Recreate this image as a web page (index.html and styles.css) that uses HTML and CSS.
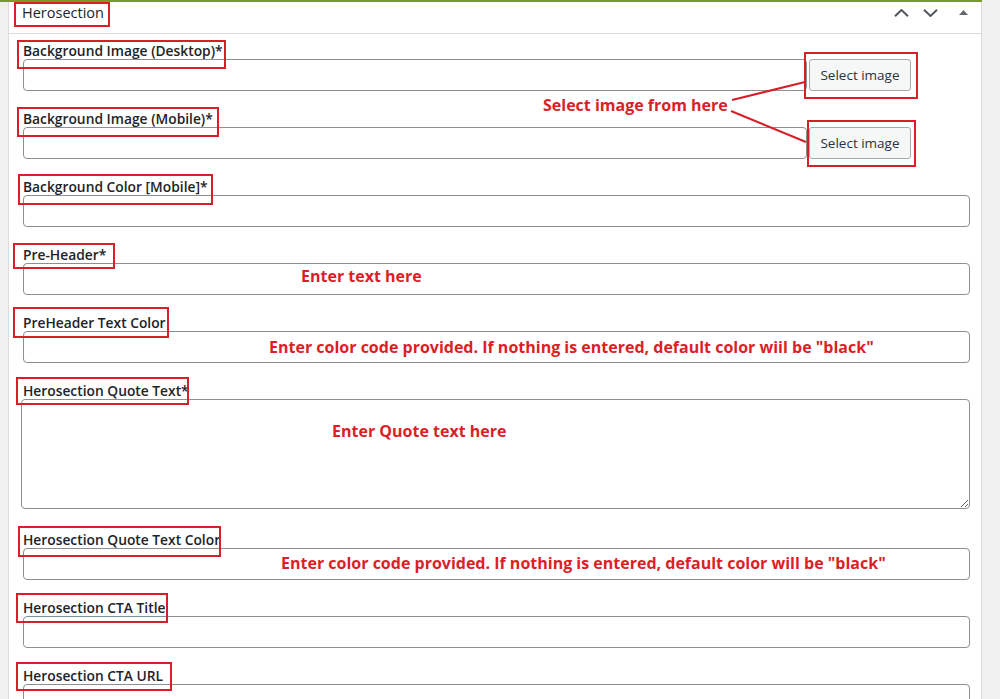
FILE: index.html
```html
<!DOCTYPE html>
<html lang="en">
<head>
<meta charset="utf-8">
<title>Herosection</title>
<link rel="stylesheet" href="styles.css">
</head>
<body>
<div class="page">
  <div class="frame">
    <div class="panel">
      <div class="panel-head">
        <h2 class="panel-title">Herosection</h2>
        <div class="panel-actions">
          <button class="icon-btn up" type="button" aria-label="Move up">
            <svg width="15" height="8" viewBox="0 0 15 8"><polyline points="1,7.2 7.5,1 14,7.2" fill="none" stroke="currentColor" stroke-width="2"/></svg>
          </button>
          <button class="icon-btn down" type="button" aria-label="Move down">
            <svg width="15" height="8" viewBox="0 0 15 8"><polyline points="1,0.8 7.5,7 14,0.8" fill="none" stroke="currentColor" stroke-width="2"/></svg>
          </button>
          <button class="icon-btn toggle" type="button" aria-label="Toggle panel">
            <svg width="9" height="5" viewBox="0 0 9 5"><polygon points="0,5 4.5,0 9,5" fill="currentColor"/></svg>
          </button>
        </div>
      </div>
      <div class="panel-body">
        <div class="field">
          <label class="field-label">Background Image (Desktop)*</label>
          <div class="media-row">
            <input class="text-input" type="text">
            <button class="select-btn" type="button">Select image</button>
          </div>
        </div>
        <div class="field">
          <label class="field-label">Background Image (Mobile)*</label>
          <div class="media-row">
            <input class="text-input" type="text">
            <button class="select-btn" type="button">Select image</button>
          </div>
        </div>
        <div class="field">
          <label class="field-label">Background Color [Mobile]*</label>
          <input class="text-input" type="text">
        </div>
        <div class="field">
          <label class="field-label">Pre-Header*</label>
          <input class="text-input" type="text">
        </div>
        <div class="field">
          <label class="field-label">PreHeader Text Color</label>
          <input class="text-input" type="text">
        </div>
        <div class="field field-area">
          <label class="field-label">Herosection Quote Text*</label>
          <textarea class="text-area"></textarea>
        </div>
        <div class="field">
          <label class="field-label">Herosection Quote Text Color</label>
          <input class="text-input" type="text">
        </div>
        <div class="field">
          <label class="field-label">Herosection CTA Title</label>
          <input class="text-input" type="text">
        </div>
        <div class="field">
          <label class="field-label">Herosection CTA URL</label>
          <input class="text-input" type="text">
        </div>
      </div>
    </div>
  </div>

  <div class="annotations">
    <svg class="marks" width="1000" height="699" viewBox="0 0 1000 699">
      <g fill="none" stroke="#d81e29" stroke-width="2">
        <rect x="15" y="3" width="94" height="23"/>
        <rect x="18" y="41" width="207" height="27"/>
        <rect x="18" y="108" width="200" height="28"/>
        <rect x="19" y="175" width="193" height="29"/>
        <rect x="14" y="244" width="100" height="24"/>
        <rect x="14" y="308" width="154" height="29"/>
        <rect x="17" y="378" width="171" height="26"/>
        <rect x="19" y="527" width="201" height="29"/>
        <rect x="17" y="594" width="150" height="28"/>
        <rect x="17" y="663" width="154" height="27"/>
        <rect x="805" y="53" width="112" height="45"/>
        <rect x="808" y="121" width="107" height="45"/>
        <line x1="732" y1="100" x2="805" y2="82"/>
        <line x1="731" y1="111" x2="806" y2="142"/>
      </g>
    </svg>
    <div class="note note-select">Select image from here</div>
    <div class="note note-text">Enter text here</div>
    <div class="note note-color1">Enter color code provided. If nothing is entered, default color wiil be "black"</div>
    <div class="note note-quote">Enter Quote text here</div>
    <div class="note note-color2">Enter color code provided. If nothing is entered, default color will be "black"</div>
  </div>
</div>
</body>
</html>
```
FILE: styles.css
```css
* { box-sizing: border-box; }

html, body {
  margin: 0;
  padding: 0;
  background: #f0f0f1;
  height: 100%;
  overflow: hidden;
}

body {
  font-family: "Open Sans", "Noto Sans", sans-serif;
  color: #1d2327;
}

.page {
  position: relative;
  width: 1000px;
  height: 699px;
}

.frame {
  width: 982px;
  padding-left: 8px;
  border-top: 2px solid #779a2c;
}

.panel {
  width: 974px;
  border-left: 1px solid #dcdcde;
  border-right: 1px solid #dcdcde;
  background: #fff;
  min-height: 697px;
}

.panel-head {
  display: flex;
  align-items: center;
  justify-content: space-between;
  height: 32px;
  padding: 0 0 10px 13px;
  border-bottom: 1px solid #dcdcde;
}

.panel-title {
  margin: 0;
  font-size: 14.5px;
  font-weight: 400;
  line-height: 21px;
  color: #1d2327;
}

.panel-actions {
  display: flex;
  align-items: center;
  height: 21px;
}

.icon-btn {
  display: flex;
  align-items: center;
  justify-content: center;
  height: 21px;
  padding: 0;
  border: 0;
  background: transparent;
  color: #50575e;
}

.icon-btn svg { display: block; }
.icon-btn.up { width: 28px; }
.icon-btn.down { width: 30px; }
.icon-btn.toggle { width: 36px; color: #646970; }

.panel-body {
  padding: 8px 11px 0 14px;
}

.field {
  margin-bottom: 19px;
}

.field-area {
  margin-bottom: 22px;
}

.field-label {
  display: block;
  font-size: 13.8px;
  font-weight: 600;
  line-height: 17px;
  color: #1d2327;
}

.text-input {
  display: block;
  width: 100%;
  height: 32px;
  margin: 0;
  padding: 0 8px;
  border: 1px solid #8c8f94;
  border-radius: 4px;
  background: #fff;
  font: inherit;
}

.text-area {
  display: block;
  width: calc(100% + 2px);
  height: 110px;
  margin: 0 0 0 -2px;
  padding: 2px 6px;
  border: 1px solid #8c8f94;
  border-radius: 4px;
  background: #fff;
  font: inherit;
  resize: vertical;
}

.media-row {
  display: grid;
  grid-template-columns: 784px 102px;
  column-gap: 2px;
}

.select-btn {
  height: 32px;
  margin: 0;
  padding: 0 10px;
  border: 1px solid #a7aaad;
  border-radius: 3px;
  background: #f6f7f7;
  color: #2c3338;
  font-family: "Open Sans", "Noto Sans", sans-serif;
  font-size: 13.5px;
  line-height: 30px;
  white-space: nowrap;
}

.annotations {
  position: absolute;
  top: 0;
  left: 0;
  width: 1000px;
  height: 699px;
  pointer-events: none;
}

.marks {
  position: absolute;
  top: 0;
  left: 0;
}

.note {
  position: absolute;
  font-family: "Open Sans", "Noto Sans", sans-serif;
  font-weight: 700;
  font-size: 16px;
  line-height: 18px;
  color: #dc1e27;
  white-space: nowrap;
}

.note-select { left: 543px; top: 96px; }
.note-text { left: 301px; top: 267px; }
.note-color1 { left: 269px; top: 338px; }
.note-quote { left: 332px; top: 422px; }
.note-color2 { left: 281px; top: 554px; }
```
